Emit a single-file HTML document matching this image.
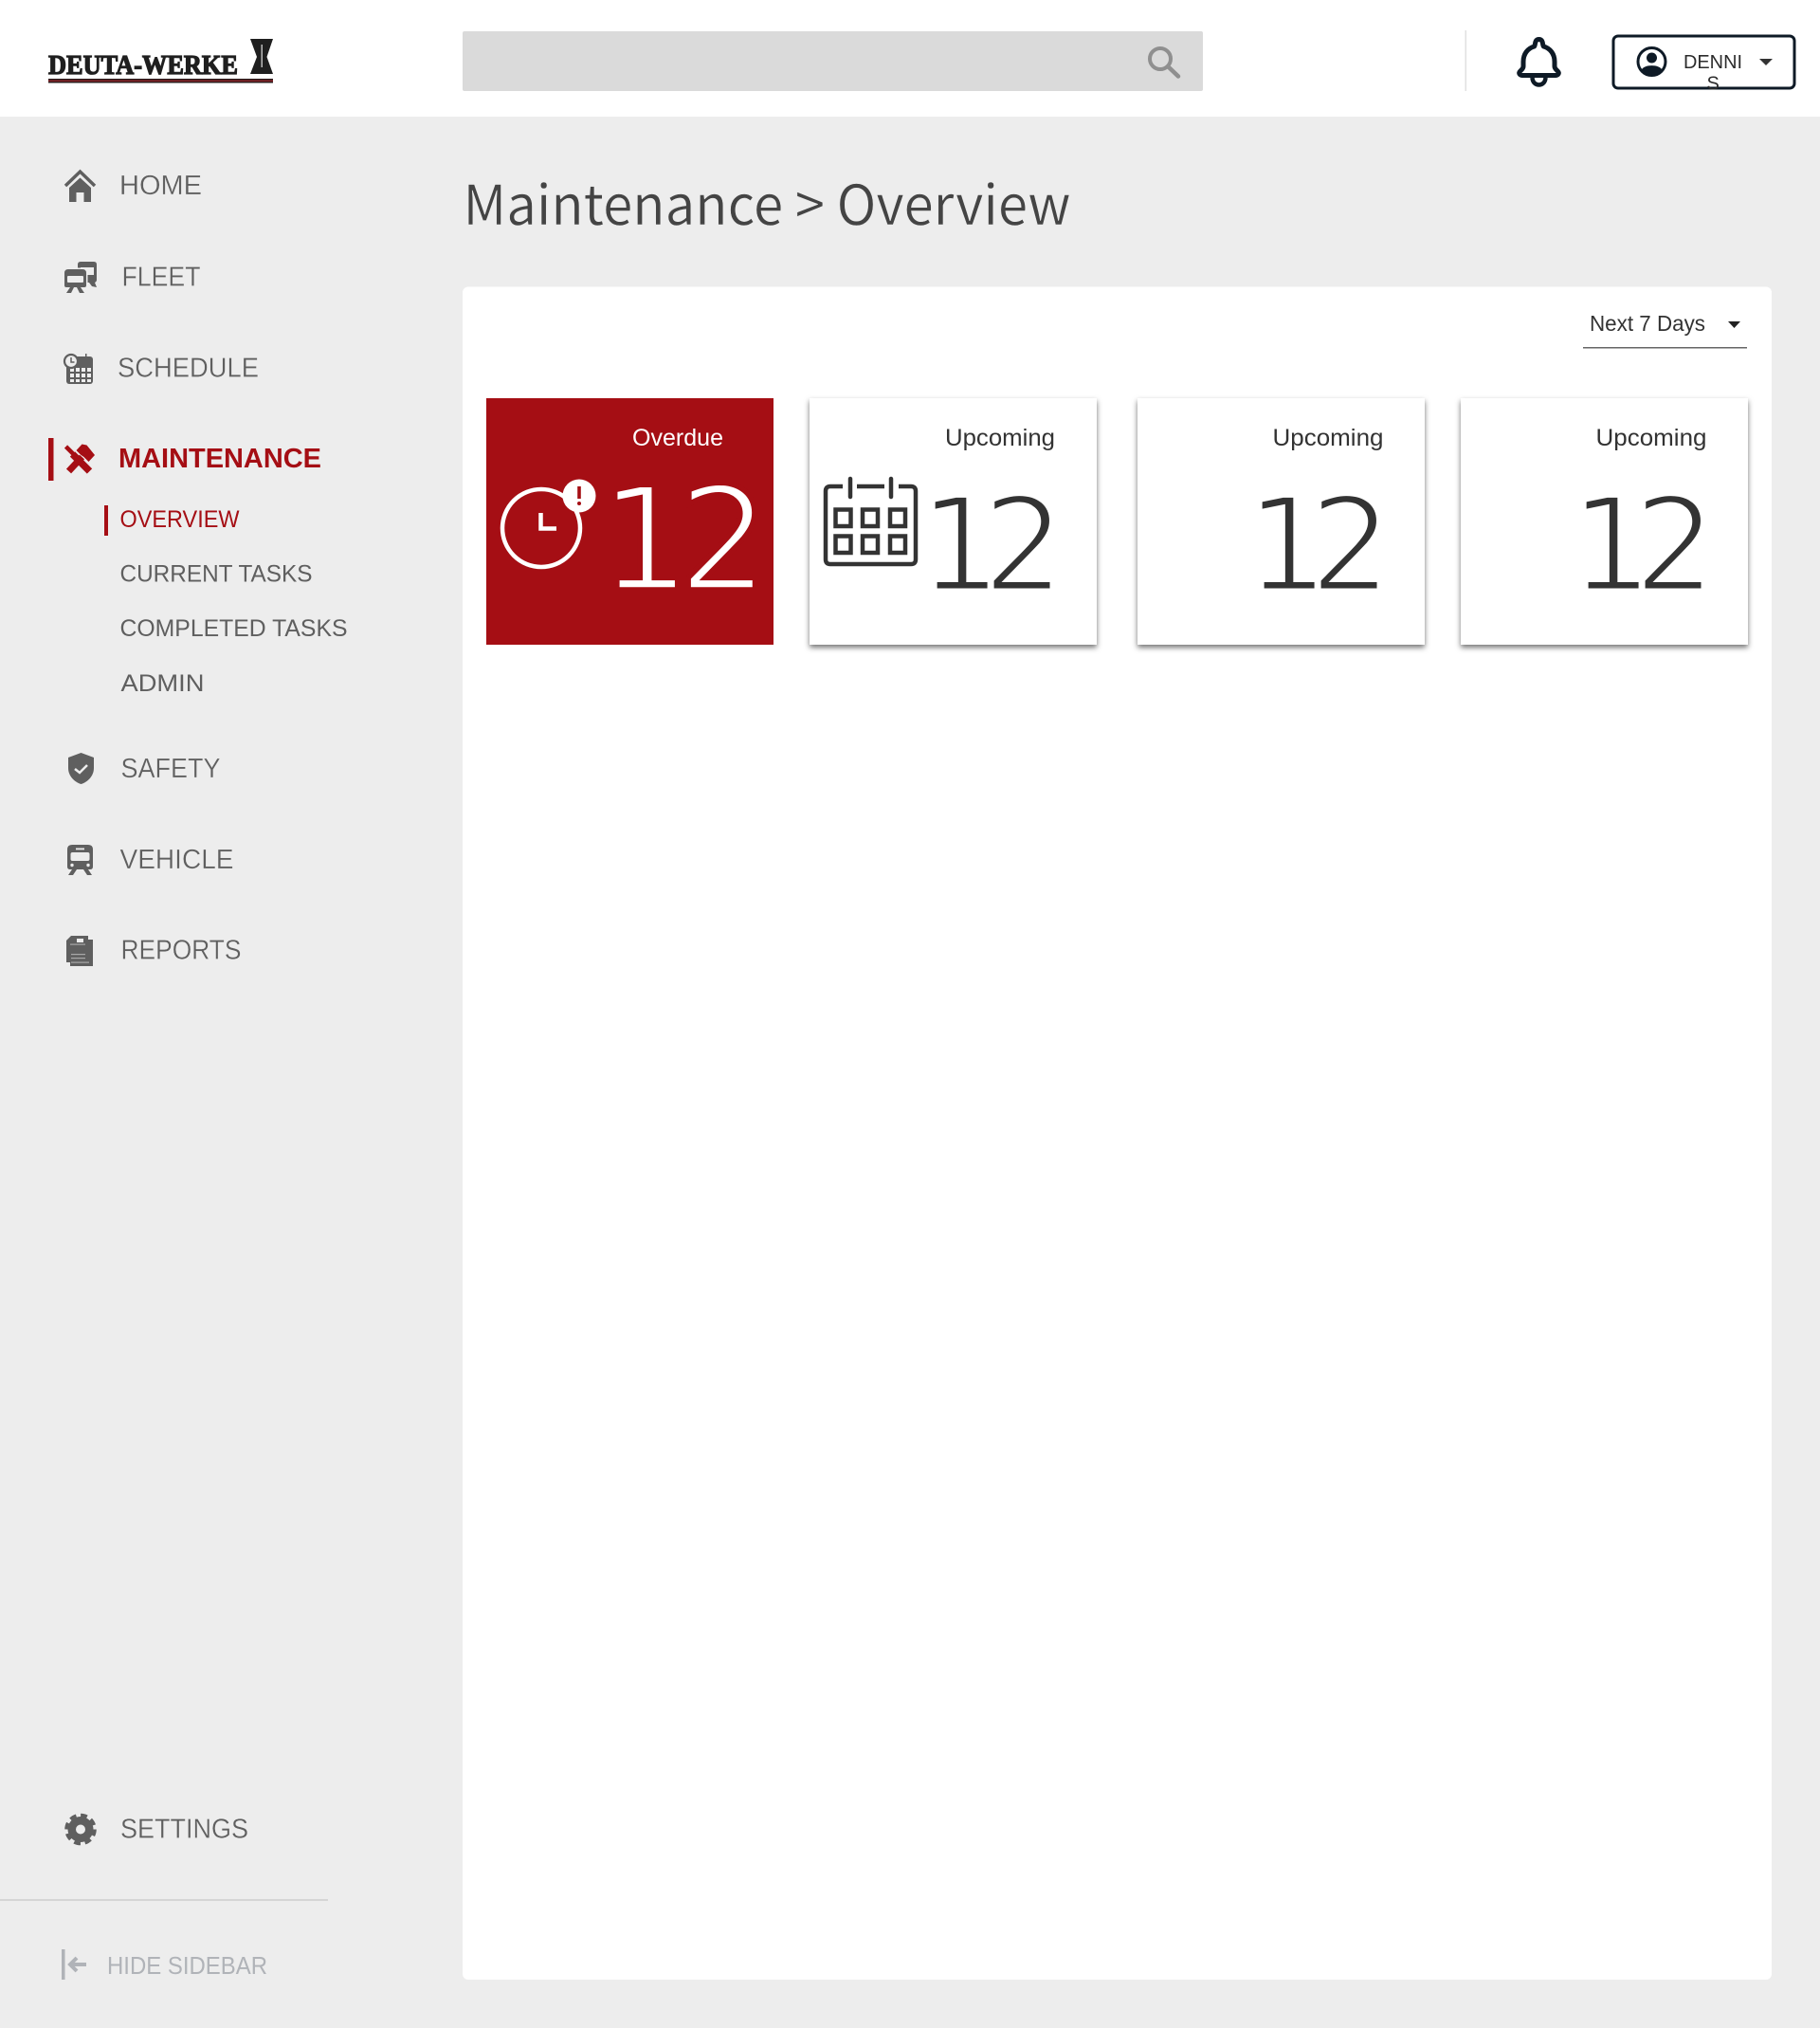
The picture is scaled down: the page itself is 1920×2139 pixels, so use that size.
<!DOCTYPE html>
<html><head><meta charset="utf-8"><title>Maintenance Overview</title>
<style>
html,body{margin:0;padding:0;background:#ededed;width:1920px;height:2139px;overflow:hidden}
svg{display:block}
text{font-family:"Liberation Sans",sans-serif}
.n{font-size:29px;fill:#5f5f5f;stroke:#ededed;stroke-width:.3px}
.s{font-size:25px;fill:#5f5f5f}
.r{fill:#a50e14}
.u{font-size:25px;fill:#333}
.big{font-family:"DejaVu Sans",sans-serif;font-size:138px;fill:#333;stroke:#fff;stroke-width:5px}
.i{fill:#5f5f5f}
</style></head><body>
<svg width="1920" height="2139" viewBox="0 0 1920 2139" xmlns="http://www.w3.org/2000/svg">
<rect width="1920" height="2139" fill="#ededed"/>
<rect width="1920" height="123" fill="#fff"/>
<!-- logo -->
<text x="51" y="78" textLength="200" lengthAdjust="spacingAndGlyphs" style="font-family:'Liberation Serif',serif;font-weight:bold;font-size:29px;fill:#1f1f1f;stroke:#1f1f1f;stroke-width:1.300px">DEUTA-WERKE</text>
<path d="M264 41H288L281.500 60L288 78H264L271 60Z" fill="#1f1f1f"/>
<rect x="275.500" y="47" width="1.500" height="24" fill="#bbb"/>
<rect x="51" y="83" width="237" height="4.500" fill="#2a1c1c"/>
<rect x="51" y="84.500" width="237" height="1.500" fill="#8a2228"/>
<!-- search -->
<rect x="488" y="33" width="781" height="63" rx="2" fill="#dadada"/>
<circle cx="1224" cy="62" r="11" fill="none" stroke="#8f8f8f" stroke-width="4"/>
<path d="M1232 70L1243 80.500" stroke="#8f8f8f" stroke-width="4.500" stroke-linecap="round"/>
<rect x="1545.500" y="32" width="1.500" height="64" fill="#e0e0e0"/>
<!-- bell -->
<path d="M1623.500 41.500C1628.500 41.500 1627 48 1628.500 49C1635.500 51 1640 57 1640 65V70C1640 73 1643 74 1644 76C1645 78 1643 79.500 1641 79.500H1606C1604 79.500 1602 78 1603 76C1604 74 1607 73 1607 70V65C1607 57 1611.500 51 1618.500 49C1620 48 1618.500 41.500 1623.500 41.500Z" fill="none" stroke="#0e1a26" stroke-width="5"/>
<path d="M1616.500 82C1617 92 1630 92 1630.500 82" fill="none" stroke="#0e1a26" stroke-width="4.500"/>
<!-- user button -->
<rect x="1702" y="38" width="191" height="55" rx="5" fill="#fff" stroke="#0e1a26" stroke-width="3"/>
<circle cx="1742.500" cy="65" r="14.500" fill="none" stroke="#0e1a26" stroke-width="3"/>
<circle cx="1742.500" cy="61" r="5.500" fill="#0e1a26"/>
<path d="M1731.500 74C1734 67.500 1751 67.500 1753.500 74C1748 80 1737 80 1731.500 74Z" fill="#0e1a26"/>
<text x="1776" y="72" textLength="62" lengthAdjust="spacingAndGlyphs" style="font-size:20px;fill:#2c2c2c">DENNI</text>
<text x="1800.500" y="94.500" style="font-size:20px;fill:#2c2c2c">S</text>
<path d="M1856 62H1870L1863 69Z" fill="#333"/>
<!-- sidebar -->
<path d="M69 196L84.500 181L100 196" fill="none" stroke="#5f5f5f" stroke-width="3.500"/>
<path d="M73 198L84.500 187.500L96 198V213H88.500V203H80.500V213H73Z" class="i"/>
<text class="n" x="126" y="205" textLength="87" lengthAdjust="spacingAndGlyphs">HOME</text>
<!-- fleet -->
<path d="M82 279Q82 276 85 276H99Q102 276 102 279V295Q102 297 100 298L102 303L97 302L94 298H82Z" class="i"/>
<rect x="85" y="282" width="14" height="8" fill="#ededed"/>
<rect x="66.500" y="282.500" width="26" height="22.500" fill="#ededed"/>
<path d="M68 288Q68 284 72 284H87Q91 284 91 288V301Q91 303 89 303H70Q68 303 68 301Z" class="i"/>
<rect x="71" y="291" width="17" height="7" rx="1" fill="#ededed"/>
<path d="M74 303H78L75 309H70ZM85 303H81L84 309H89Z" class="i"/>
<text class="n" x="128.500" y="301.500" textLength="83" lengthAdjust="spacingAndGlyphs">FLEET</text>
<!-- schedule -->
<rect x="70" y="376" width="28" height="29" rx="3" class="i"/>
<g fill="#ededed"><rect x="74" y="388" width="4" height="4"/><rect x="80" y="388" width="4" height="4"/><rect x="86" y="388" width="4" height="4"/><rect x="92" y="388" width="4" height="4"/><rect x="74" y="394" width="4" height="4"/><rect x="80" y="394" width="4" height="4"/><rect x="86" y="394" width="4" height="4"/><rect x="92" y="394" width="4" height="4"/><rect x="74" y="400" width="4" height="3"/><rect x="80" y="400" width="4" height="3"/><rect x="86" y="400" width="4" height="3"/><rect x="92" y="400" width="4" height="3"/></g>
<rect x="90" y="373" width="1.500" height="5" class="i"/>
<circle cx="75" cy="381" r="7" fill="#ededed" stroke="#5f5f5f" stroke-width="2.200"/>
<path d="M75 377V382H78.500" fill="none" stroke="#5f5f5f" stroke-width="1.500"/>
<text class="n" x="124" y="397.500" textLength="149" lengthAdjust="spacingAndGlyphs">SCHEDULE</text>
<!-- maintenance -->
<rect x="51" y="462" width="5.500" height="45" class="r"/>
<g transform="translate(-1.500 0)">
<path d="M71 471L80 480" stroke="#a50e14" stroke-width="4.500" fill="none"/>
<path d="M78 479L96 497" stroke="#a50e14" stroke-width="7.500" fill="none"/>
<path d="M74 497L88 482" stroke="#a50e14" stroke-width="7" fill="none"/>
<path d="M82 475L88 468.500L93 469.500L101.500 480L95 487L90 482L87 480Z" class="r"/>
</g>
<text x="125" y="493" textLength="214" lengthAdjust="spacingAndGlyphs" style="font-size:29px;font-weight:bold;fill:#a50e14">MAINTENANCE</text>
<rect x="110" y="533" width="4" height="32" class="r"/>
<text class="s r" x="126.500" y="556" textLength="126" lengthAdjust="spacingAndGlyphs" style="fill:#a50e14">OVERVIEW</text>
<text class="s" x="126.500" y="613.500" textLength="203" lengthAdjust="spacingAndGlyphs">CURRENT TASKS</text>
<text class="s" x="126.500" y="671" textLength="240" lengthAdjust="spacingAndGlyphs">COMPLETED TASKS</text>
<text class="s" x="127.500" y="729" textLength="88" lengthAdjust="spacingAndGlyphs">ADMIN</text>
<!-- safety -->
<path d="M85.500 794L99 799V810C99 819 92 825 85.500 827C79 825 72 819 72 810V799Z" class="i"/>
<path d="M79 811L84 815L92 807" fill="none" stroke="#ededed" stroke-width="2.500"/>
<text class="n" x="127.500" y="820" textLength="105" lengthAdjust="spacingAndGlyphs">SAFETY</text>
<!-- vehicle -->
<path d="M71 896Q71 891 76 891H93Q98 891 98 896V914Q98 917 95 917H74Q71 917 71 914Z" class="i"/>
<rect x="74.500" y="899" width="20" height="9" rx="2" fill="#ededed"/>
<rect x="80" y="894.500" width="9" height="1.800" fill="#ededed"/>
<circle cx="76" cy="912.500" r="1.700" fill="#ededed"/><circle cx="93" cy="912.500" r="1.700" fill="#ededed"/>
<path d="M76 917H81L77 923H72ZM88 917H93L97 923H92Z" class="i"/>
<text class="n" x="126.500" y="916" textLength="120" lengthAdjust="spacingAndGlyphs">VEHICLE</text>
<!-- reports -->
<path d="M74 995H98V1019H74Z" class="i"/>
<path d="M70 992L75 987H93V1015H70Z" class="i"/>
<rect x="93" y="991" width="5" height="28" class="i"/>
<rect x="81" y="990" width="7" height="4" fill="#ededed"/>
<g fill="#a8a8a8"><rect x="74" y="995.500" width="16" height="1.200"/><rect x="75" y="1006" width="15" height="1.200"/><rect x="75" y="1010" width="15" height="1.200"/><rect x="75" y="1014.500" width="19" height="1.200"/></g>
<text class="n" x="127.500" y="1011.500" textLength="127" lengthAdjust="spacingAndGlyphs">REPORTS</text>
<!-- settings -->
<circle cx="85" cy="1929.500" r="13.500" class="i"/>
<circle cx="85" cy="1929.500" r="15" fill="none" stroke="#5f5f5f" stroke-width="3.500" stroke-dasharray="7 4.780"/>
<circle cx="85" cy="1929.500" r="5" fill="#ededed"/>
<text class="n" x="127" y="1938.500" textLength="135" lengthAdjust="spacingAndGlyphs">SETTINGS</text>
<rect x="0" y="2003" width="346" height="2" fill="#d5d5d5"/>
<rect x="65" y="2056" width="3.500" height="32" fill="#b0b3b8"/>
<path d="M91 2072H75M81 2065L74 2072L81 2079" fill="none" stroke="#b0b3b8" stroke-width="4"/>
<text x="113" y="2082" textLength="169" lengthAdjust="spacingAndGlyphs" style="font-size:26px;fill:#b0b3b8">HIDE SIDEBAR</text>
<!-- heading -->
<text x="488.500" y="237" textLength="641" lengthAdjust="spacingAndGlyphs" style="font-family:'Noto Sans CJK JP','Liberation Sans',sans-serif;font-size:58px;fill:#444;font-weight:400;stroke:#ededed;stroke-width:.5px">Maintenance &gt; Overview</text>
<!-- panel -->
<rect x="488" y="302.500" width="1381" height="1785.500" rx="6" fill="#fff"/>
<text x="1677" y="349" textLength="122" lengthAdjust="spacingAndGlyphs" style="font-size:23px;fill:#333">Next 7 Days</text>
<path d="M1823 339H1836L1829.500 346Z" fill="#222"/>
<rect x="1670" y="366" width="173" height="1.500" fill="#666"/>
<!-- cards -->
<rect x="513" y="420" width="303" height="260" fill="#a50e14"/>
<g style="filter:drop-shadow(.5px 3px 3px rgba(0,0,0,.55))" fill="#fff">
<rect x="854" y="420" width="303" height="260"/>
<rect x="1200" y="420" width="303" height="260"/>
<rect x="1541" y="420" width="303" height="260"/>
</g>
<!-- card 1 -->
<text x="667" y="470" textLength="96" lengthAdjust="spacingAndGlyphs" style="font-size:25px;fill:#fff">Overdue</text>
<circle cx="571" cy="557" r="41" fill="none" stroke="#fff" stroke-width="4.500"/>
<path d="M570.500 541V557.500H587" fill="none" stroke="#fff" stroke-width="4.500"/>
<circle cx="611" cy="523" r="17.500" fill="#fff"/>
<rect x="609.200" y="513" width="3.600" height="13" fill="#a50e14"/>
<circle cx="611" cy="531" r="2" fill="#a50e14"/>
<text class="big" x="632 715" y="622" style="font-size:152px;fill:#fff;stroke:#a50e14;stroke-width:5.500px">12</text>
<!-- card 2 -->
<text class="u" x="997" y="470" textLength="116" lengthAdjust="spacingAndGlyphs">Upcoming</text>
<g fill="none" stroke="#333" stroke-width="4.500">
<path d="M889 513H876Q871 513 871 518V590Q871 595 876 595H961Q966 595 966 590V518Q966 513 961 513H948M904 513H933"/>
<path d="M897 505V524M940 505V524" stroke-linecap="round"/>
<rect x="881.500" y="537.500" width="16" height="17.500"/><rect x="910" y="537.500" width="16" height="17.500"/><rect x="939" y="537.500" width="16" height="17.500"/>
<rect x="881.500" y="565.500" width="16" height="17.500"/><rect x="910" y="565.500" width="16" height="17.500"/><rect x="939" y="565.500" width="16" height="17.500"/>
</g>
<text class="big" x="969 1036" y="623">12</text>
<!-- card 3 -->
<text class="u" x="1342.500" y="470" textLength="117" lengthAdjust="spacingAndGlyphs">Upcoming</text>
<text class="big" x="1314 1381" y="623">12</text>
<!-- card 4 -->
<text class="u" x="1683.500" y="470" textLength="117" lengthAdjust="spacingAndGlyphs">Upcoming</text>
<text class="big" x="1656 1723" y="623">12</text>
</svg>
</body></html>
